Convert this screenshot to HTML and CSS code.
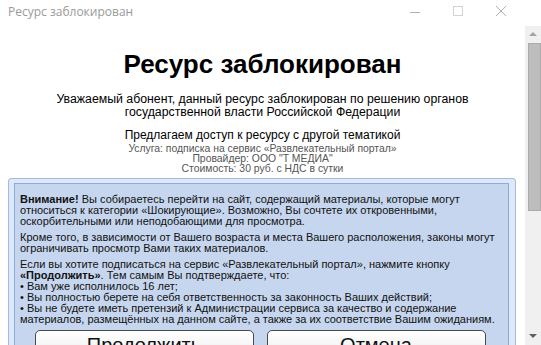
FILE: index.html
```html
<!DOCTYPE html>
<html lang="ru">
<head>
  <meta charset="UTF-8" />
  <title>Ресурс заблокирован</title>
  <link rel="stylesheet" href="styles.css">
</head>
<body>

  <!-- Window title bar -->
  <div class="titlebar">
    <span class="title">Ресурс заблокирован</span>
    <svg class="controls" width="100" height="26" viewBox="0 0 100 26">
      <path d="M2 12.5h10" stroke="#b0b0b0" stroke-width="1"/>
      <rect x="45.5" y="6.5" width="9" height="9" fill="none" stroke="#d2d2d2"/>
      <path d="M88 6l10 10M98 6L88 16" stroke="#b0b0b0" stroke-width="1"/>
    </svg>
  </div>

  <div class="frame">
    <!-- Page content -->
    <main class="page">
      <h1>Ресурс заблокирован</h1>
      <p class="notice">Уважаемый абонент, данный ресурс заблокирован по решению органов<br>государственной власти Российской Федерации</p>
      <p class="offer">Предлагаем доступ к ресурсу с другой тематикой</p>
      <p class="terms">Услуга: подписка на сервис «Развлекательный портал»<br>Провайдер: ООО "Т МЕДИА"<br>Стоимость: 30 руб. с НДС в сутки</p>

      <div class="box">
        <div class="box-inner">
          <p><b>Внимание!</b> Вы собираетесь перейти на сайт, содержащий материалы, которые могут относиться к категории «Шокирующие». Возможно, Вы сочтете их откровенными, оскорбительными или неподобающими для просмотра.</p>
          <p>Кроме того, в зависимости от Вашего возраста и места Вашего расположения, законы могут ограничивать просмотр Вами таких материалов.</p>
          <p>Если вы хотите подписаться на сервис «Развлекательный портал», нажмите кнопку <b>«Продолжить»</b>. Тем самым Вы подтверждаете, что:<br>
            • Вам уже исполнилось 16 лет;<br>
            • Вы полностью берете на себя ответственность за законность Ваших действий;<br>
            • Вы не будете иметь претензий к Администрации сервиса за качество и содержание материалов, размещённых на данном сайте, а также за их соответствие Вашим ожиданиям.</p>
          <div class="actions">
            <button class="btn">Продолжить</button>
            <button class="btn">Отмена</button>
          </div>
        </div>
      </div>
    </main>

    <!-- Scrollbar -->
    <div class="scrollbar">
      <span class="arrow up"></span>
      <span class="thumb"></span>
      <span class="arrow down"></span>
    </div>
  </div>

</body>
</html>
```

FILE: styles.css
```css
/* Reset and base */
* {
  margin: 0;
  padding: 0;
  box-sizing: border-box;
}

html, body {
  width: 541px;
  height: 345px;
  overflow: hidden;
  background: #fff;
  font-family: 'Liberation Sans', Arial, sans-serif;
}

/* Title bar */
.titlebar {
  height: 26px;
  display: flex;
  align-items: center;
  justify-content: space-between;
  background: #fff;
}

.title {
  padding-left: 8px;
  font-family: 'Open Sans', 'Noto Sans', sans-serif;
  font-size: 12px;
  color: #9a9a9a;
  margin-top: -3px;
}

.controls {
  display: block;
  margin-right: 33px;
}

/* Frame: page + scrollbar */
.frame {
  display: flex;
  height: 319px;
}

.page {
  flex: 1;
  overflow: hidden;
  text-align: center;
  color: #000;
}

.page h1 {
  font-size: 26px;
  font-weight: 700;
  margin-top: 25px;
  line-height: 26px;
}

.notice {
  font-size: 12.3px;
  line-height: 13px;
  margin-top: 16px;
}

.offer {
  font-size: 12px;
  line-height: 14px;
  margin-top: 9px;
}

.terms {
  font-size: 10.4px;
  line-height: 10px;
  color: #555;
  margin-top: 2px;
}

/* Warning box */
.box {
  margin: 4px 9px 0 8px;
  border: 1px solid #a6bbdc;
  border-radius: 3px;
  background: #dde8f8;
  padding: 4px 6px 0 5px;
  text-align: left;
}

.box-inner {
  border: 1px solid #8eaad6;
  background: #c6d6ee;
  padding: 10px 8px 0 5px;
}

.box-inner p {
  font-size: 11px;
  line-height: 11px;
  color: #111;
  margin-bottom: 5px;
}

.actions {
  display: flex;
  justify-content: center;
  gap: 13px;
  margin-top: 3px;
}

.btn {
  width: 219px;
  height: 30px;
  border: 1px solid #4a4a4a;
  border-radius: 5px;
  background: linear-gradient(#ffffff, #ececec);
  font-family: 'Liberation Sans', Arial, sans-serif;
  font-size: 20px;
  line-height: 20px;
  color: #111;
}

/* Scrollbar */
.scrollbar {
  width: 16px;
  background: #f0f0f0;
  display: flex;
  flex-direction: column;
  align-items: center;
}

.arrow {
  width: 0;
  height: 0;
  border-left: 4px solid transparent;
  border-right: 4px solid transparent;
}

.arrow.up {
  border-bottom: 4px solid #a3a3a3;
  margin-top: 6px;
}

.arrow.down {
  border-top: 4px solid #606060;
  margin-top: auto;
  margin-bottom: 7px;
}

.thumb {
  width: 13px;
  height: 168px;
  margin-top: 7px;
  margin-left: 2px;
  background: #bdbdbd;
  border: 1px solid #ababab;
}
```
